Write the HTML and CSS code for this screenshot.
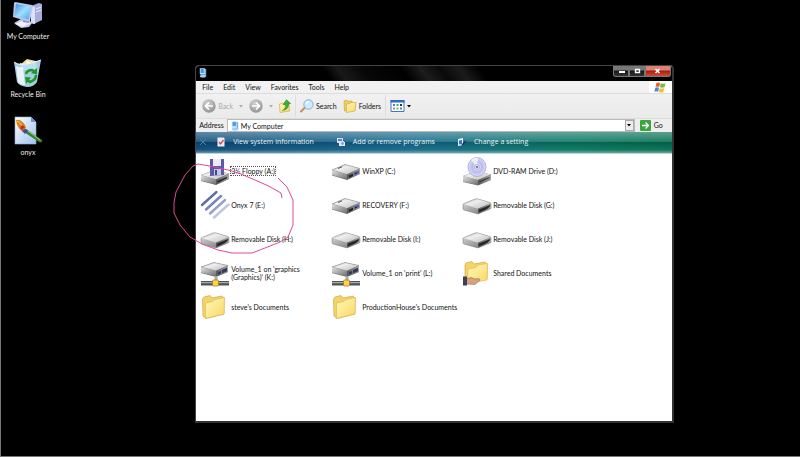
FILE: index.html
```html
<!DOCTYPE html>
<html lang="en">
<head>
<meta charset="utf-8">
<title>My Computer</title>
<link rel="stylesheet" href="styles.css">
</head>
<body>
<svg class="defs" aria-hidden="true">
  <defs>
    <linearGradient id="gTop" x1="0" y1="0" x2="1" y2="1"><stop offset="0" stop-color="#9a9a9a"/><stop offset=".35" stop-color="#efefef"/><stop offset="1" stop-color="#b9b9b9"/></linearGradient>
    <linearGradient id="gLeft" x1="0" y1="0" x2="1" y2="1"><stop offset="0" stop-color="#e2e2e2"/><stop offset="1" stop-color="#6d6d6d"/></linearGradient>
    <linearGradient id="gRight" x1="0" y1="0" x2="1" y2="0"><stop offset="0" stop-color="#555"/><stop offset="1" stop-color="#a8a8a8"/></linearGradient>
    <linearGradient id="gFolder" x1="0" y1="0" x2="1" y2="1"><stop offset="0" stop-color="#fff9b8"/><stop offset="1" stop-color="#f8d766"/></linearGradient>
    <linearGradient id="gScreen" x1="0" y1="0" x2="1" y2="1"><stop offset="0" stop-color="#3f86e6"/><stop offset=".5" stop-color="#9fe0ff"/><stop offset="1" stop-color="#4c9df0"/></linearGradient>
    <linearGradient id="gPaper" x1="0" y1="0" x2="1" y2="1"><stop offset="0" stop-color="#ffffff"/><stop offset="1" stop-color="#9fc0ee"/></linearGradient>
    <radialGradient id="gRound" cx=".4" cy=".3" r=".8"><stop offset="0" stop-color="#d2d2d2"/><stop offset="1" stop-color="#8c8c8c"/></radialGradient>
    <radialGradient id="gDisc"><stop offset=".2" stop-color="#fff"/><stop offset=".5" stop-color="#b7b9ea"/><stop offset="1" stop-color="#dcdcf8"/></radialGradient>

    <symbol id="drive" viewBox="0 0 30 30">
      <path d="M1 14 14 8.500 29 12.500V18L16 24 1 19.500Z" fill="#707070"/>
      <path d="M1 14 14 8.500 29 12.500 16 18.500Z" fill="url(#gTop)" stroke="#8b8b8b" stroke-width=".5"/>
      <path d="M1 14 16 18.500V23.500L1 19Z" fill="url(#gLeft)"/>
      <path d="M16 18.500 29 12.500V17.500L16 23.500Z" fill="url(#gRight)"/>
      <path d="m18 19.500 4-1.800v2.400l-4 1.800Z" fill="#222"/>
      <path d="m23 16.500 5-2.200v3l-5 2.300Z" fill="#5a609e"/>
      <path d="m24 17.200 2-.9v1.300l-2 .9Z" fill="#20264f"/>
      <path d="m7 12.500 4-1.700" stroke="#555" stroke-width="1"/>
    </symbol>
    <symbol id="removable" viewBox="0 0 30 30">
      <path d="M1 14.500Q1 14 2 13.500L13 9Q14.500 8.500 16 9L28 12.500Q29 13 29 14V18Q29 18.500 28 19L17 23.500Q16 24 15 23.700L2 20Q1 19.500 1 19Z" fill="url(#gLeft)" stroke="#777" stroke-width=".5"/>
      <path d="M1.500 14 14.500 9 29 13 16 18.700Z" fill="url(#gTop)"/>
      <path d="M16 18.700 29 13V18L16 23.700Z" fill="url(#gRight)"/>
      <path d="M17 19.800 28.500 14.800Q28 18.800 17 22.300Z" fill="#262626"/>
    </symbol>
    <symbol id="floppy" viewBox="0 0 30 30">
      <path d="M1 19 14 14 29 17.500V23L16 29 1 25Z" fill="#666"/>
      <path d="M1 19 14 14 29 17.500 16 23.500Z" fill="url(#gTop)"/>
      <path d="M1 19 16 23.500V28.500L1 24.500Z" fill="url(#gLeft)"/>
      <path d="M16 23.500 29 17.500V23L16 28.500Z" fill="url(#gRight)"/>
      <path d="m17.500 25 9.500-4.300v1.600l-9.500 4.400Z" fill="#222"/>
      <path d="M10 3H24V19L10 20Z" fill="#5b5aa8"/>
      <path d="M13 3h8v7h-8Z" fill="#e9ebf7"/><path d="M14 13h7v6l-7 .5Z" fill="#c5c7e6"/><path d="M15 14h2v5h-2Z" fill="#444488"/>
    </symbol>
    <symbol id="dvd" viewBox="0 0 30 30">
      <path d="M1 20 14 15 29 18.500V24L16 29.500 1 26Z" fill="#777"/>
      <path d="M1 20 14 15 29 18.500 16 24Z" fill="url(#gTop)"/>
      <path d="M1 20 16 24V29L1 25.500Z" fill="url(#gLeft)"/>
      <path d="M16 24 29 18.500V23.500L16 29Z" fill="url(#gRight)"/>
      <path d="m17.500 25.300 10-4.200v1l-10 4.300Z" fill="#333"/>
      <ellipse cx="15" cy="11" rx="9" ry="9.500" fill="url(#gDisc)" stroke="#9a9bc8" stroke-width=".7"/>
      <path d="M15 11 9 4Q12 1.500 16 1.800Z" fill="#fff" opacity=".7"/>
      <circle cx="15" cy="11" r="2.500" fill="#e9e9f7" stroke="#7d80b8" stroke-width=".6"/><circle cx="15" cy="11" r="1" fill="#555a88"/>
    </symbol>
    <symbol id="netdrive" viewBox="0 0 30 30">
      <path d="M1 9 14 4.500 28 7.500V14L16 19 1 15Z" fill="#666"/>
      <path d="M1 9 14 4.500 28 7.500 16 13Z" fill="url(#gTop)" stroke="#888" stroke-width=".5"/>
      <path d="M1 9 16 13V18.500L1 14.500Z" fill="url(#gLeft)"/>
      <path d="M16 13 28 7.500V13.500L16 18.500Z" fill="url(#gRight)"/>
      <path d="m18 14.300 3-1.300v2.400l-3 1.300ZM22 12l5-2.300v3.500L22 15.300Z" fill="#33385f"/>
      <path d="M14.500 18h3v5h-3Z" fill="#aaa"/>
      <path d="M1 23H29V27.500H1Z" fill="#4e5557"/><path d="M1 24H29V25.200H1Z" fill="#a5adaf"/>
      <rect x="12.500" y="22" width="6" height="6" rx="1" fill="#ffd24d" stroke="#a07718" stroke-width=".7"/>
    </symbol>
    <symbol id="folder" viewBox="0 0 30 30">
      <path d="M2.500 7 4 5 10 3.500 12 6 22 4 24 6V22L6 26.500 3 24Z" fill="#f3d567" stroke="#c99b2e" stroke-width=".6"/>
      <path d="M5.500 11 13 9.500 15 7.500 24.500 5.500 24 22 5.500 26.500Z" fill="url(#gFolder)" stroke="#dab354" stroke-width=".6"/>
    </symbol>
    <symbol id="shared" viewBox="0 0 30 30">
      <path d="M3 7 4 5 10 3.500 12 6 23 4 25 6V21L6 24.500 3 23Z" fill="#f3d567" stroke="#c99b2e" stroke-width=".6"/>
      <path d="M6 11 14 9.500 16 7 25.500 5.500 25 22 5.500 25.500Z" fill="url(#gFolder)" stroke="#dab354" stroke-width=".6"/>
      <path d="M4 21 9 19.500 13 21 17 20.500 18 22 13 26.500 4 26Z" fill="#d9a27c" stroke="#8a5a40" stroke-width=".5"/>
      <path d="M1 18.500H5V27.500H1Z" fill="#39405a"/>
    </symbol>
    <symbol id="lines" viewBox="0 0 30 30">
      <g stroke-width="2.400" stroke-linecap="round"><path d="M2 15 16.500 2" stroke="#5f6ea8"/><path d="M6 19.500 21 6" stroke="#7784b8"/><path d="M10 23.500 25 10" stroke="#959fc9"/><path d="M14 27.500 28.500 14.500" stroke="#c0c6e1"/></g>
    </symbol>
    <symbol id="computer" viewBox="0 0 30 30">
      <path d="M18 6 26 3 29 4V20L21 24 18 23Z" fill="#a7aedb"/><path d="M18 6 22 7V24L18 23Z" fill="#dfe1f6"/><path d="m23 9 5-2M23 12l5-2" stroke="#eceefd"/>
      <path d="M1 23 8 19 20 22 16 27 8 28Z" fill="#c3c8e6"/><path d="M2 24 9 21 18 23 10 27Z" fill="#eef0fb"/>
      <path d="m10 19 6 1v3l-6-1Z" fill="#8d93bf"/>
      <path d="M2 2 19 5 20 6 17 21 15 21.500 0 17 1 3Z" fill="#b9c6ea"/>
      <path d="M3 4 18 6.500 15.500 19.500 1.500 16Z" fill="url(#gScreen)"/>
    </symbol>
    <symbol id="bin" viewBox="0 0 30 30">
      <path d="m8 6 6-5 4 1 5 1 1 8H8Z" fill="#f5e3a0"/><path d="m7 5 6 2 1-4 6 3-2 6H8Z" fill="#fff"/>
      <path d="M1 4Q7 9 28 2L24 24Q21 29 14 29 6 28 4 24Z" fill="#b8dcf2" opacity=".92"/>
      <path d="M3 8Q8 10 10 9L12 27Q7 27 5 24Z" fill="#f3faff" opacity=".85"/>
      <path d="M1 4Q7 10 28 2" fill="none" stroke="#e6f6ff"/>
      <g fill="none" stroke="#159a2b" stroke-width="2.600"><path d="M13 16Q14 12 19 12L22 14"/><path d="M23 17Q23 22 17 24L14 22"/></g>
      <path d="m18 15 6 1.500V10ZM18 19.500l-6-.5 1 7Z" fill="#159a2b"/>
    </symbol>
    <symbol id="paint" viewBox="0 0 30 30">
      <path d="M2 1H18L23 6V28H2Z" fill="url(#gPaper)" stroke="#91b1e2" stroke-width=".6"/><path d="M18 1V6H23Z" fill="#6793d5"/>
      <path d="M13 13 29 24Q30 27 26 26L11 16Z" fill="#37822e"/><path d="m15 15 12 9" stroke="#9ad07d"/>
      <path d="m10 11 5 4-3 3-4-4Z" fill="#3a4d9e"/><path d="M3 4Q8 3 12 9L13 12 9 15Q4 12 3 4Z" fill="#d8841d"/><path d="M4 5Q8 6 10 12" stroke="#ffd55f" fill="none"/><path d="m9 9 3 2-3 3-2-2Z" fill="#b9341d"/>
    </symbol>
    <symbol id="pc" viewBox="0 0 10 12">
      <path d="M1 0H7L8 1V7L7 8H2L1 7Z" fill="#bfe1ff"/><path d="M2 1H6V6H2Z" fill="#4a97ec"/><path d="M7 1H9V10H7Z" fill="#7db2e8"/><path d="M2 8H7L9 11 5 12 1 11Z" fill="#9dd0f8"/>
    </symbol>
  </defs>
</svg>

<main class="desktop">
  <nav class="shortcuts" aria-label="Desktop">
    <a class="shortcut" href="#"><svg><use href="#computer"/></svg><span>My Computer</span></a>
    <a class="shortcut" href="#"><svg><use href="#bin"/></svg><span>Recycle Bin</span></a>
    <a class="shortcut" href="#"><svg><use href="#paint"/></svg><span>onyx</span></a>
  </nav>

  <section class="window" aria-label="My Computer">
    <header class="titlebar">
      <svg class="pc"><use href="#pc"/></svg>
      <div class="controls">
        <button aria-label="Minimize"><svg viewBox="0 0 15 10"><path d="M5 5h6v2H5z" fill="#fff"/></svg></button>
        <button aria-label="Maximize"><svg viewBox="0 0 15 10"><path d="M5.500 3.500h4v3h-4z" fill="none" stroke="#fff" stroke-width="1.400"/></svg></button>
        <button class="close" aria-label="Close"><svg viewBox="0 0 15 10"><path d="m5.500 3 4 4m0-4-4 4" stroke="#fff" stroke-width="1.600"/></svg></button>
      </div>
    </header>

    <div class="menurow">
      <nav class="menu" aria-label="Menu">
        <button>File</button><button>Edit</button><button>View</button><button>Favorites</button><button>Tools</button><button>Help</button>
      </nav>
      <div class="flag">
        <svg viewBox="0 0 12 11"><path d="M2.500 1Q4.500 0 6 1L5.200 5Q3.500 4 1.500 5Z" fill="#ee5a2e"/><path d="M6.700 1.300Q9 2.300 11.500 1.200L10.500 5.300Q8.500 6.200 5.900 5.300Z" fill="#7cbb3c"/><path d="M1.300 5.800Q3.300 4.800 5 5.800L4.200 9.800Q2.500 8.800.3 9.800Z" fill="#4688dd"/><path d="M5.700 6.200Q8 7 10.300 6.200L9.300 10.200Q7.200 11 4.900 10.100Z" fill="#f7bd2e"/></svg>
      </div>
    </div>

    <div class="toolbar">
      <button class="tool muted"><svg class="round" viewBox="0 0 14 14"><circle cx="7" cy="7" r="6.700" fill="url(#gRound)"/><path d="M11 7H4M7 3.500 3.500 7 7 10.500" fill="none" stroke="#fff" stroke-width="1.700"/></svg>Back</button>
      <svg class="caret muted" viewBox="0 0 4 3"><path d="M0 0h4L2 2.500z"/></svg>
      <button class="tool" aria-label="Forward"><svg class="round" viewBox="0 0 14 14"><circle cx="7" cy="7" r="6.700" fill="url(#gRound)"/><path d="M3 7h7M7 3.500 10.500 7 7 10.500" fill="none" stroke="#fff" stroke-width="1.700"/></svg></button>
      <svg class="caret muted" viewBox="0 0 4 3"><path d="M0 0h4L2 2.500z"/></svg>
      <button class="tool" aria-label="Up"><svg class="up" viewBox="0 0 12 14"><path d="M.5 5 4 4 5 5.500 10 4.500 10.500 12 1 13.500Z" fill="url(#gFolder)" stroke="#cfa33b" stroke-width=".6"/><path d="M3.500 11.500Q7 10 6.500 5.500H4L7.500.8 11.700 4.500 9.500 5Q9.800 10.500 3.500 11.500Z" fill="#3eae32" stroke="#23801e" stroke-width=".5"/></svg></button>
      <span class="rule"></span>
      <button class="tool"><svg class="round" viewBox="0 0 14 14"><path d="m5.500 8-5 5" stroke="#c98d5d" stroke-width="2"/><circle cx="8.500" cy="5.500" r="4.700" fill="#cdeaff" stroke="#7fb0d8"/><path d="M6 5Q6.500 2.800 9 2.700" fill="none" stroke="#fff" stroke-width="1.300"/></svg>Search</button>
      <button class="tool"><svg class="round" viewBox="0 0 14 14"><path d="M1 2 4 1 5 2.500 9 2V11L1.500 12Z" fill="#f3cf5c" stroke="#c99b2e" stroke-width=".6"/><path d="M3.500 5 7 4.500 8 3.500 13 3.500 12 12 3.500 13.500Z" fill="url(#gFolder)" stroke="#cfa03a" stroke-width=".6"/></svg>Folders</button>
      <span class="rule"></span>
      <button class="tool" aria-label="Views"><svg class="views" viewBox="0 0 14 12"><path d="M.5.500h13v11H.5z" fill="#fff" stroke="#3c78c8"/><path d="M0 0h14v2.500H0z" fill="#2e6dc4"/><path d="M2.500 4h2v2h-2zm7 3.500h2v2h-2z" fill="#6274c4"/><path d="M6 4h2v2H6z" fill="#4ba563"/><path d="M9.500 4h2v2h-2z" fill="#333"/><path d="M2.500 7.500h2v2h-2z" fill="#cc7b7b"/><path d="M6 7.500h2v2H6z" fill="#51b6c8"/></svg><svg class="caret" viewBox="0 0 4 3"><path d="M0 0h4L2 2.500z"/></svg></button>
    </div>

    <form class="address">
      <label for="addr">Address</label>
      <div class="field">
        <svg class="pc"><use href="#pc"/></svg>
        <input id="addr" type="text" value="My Computer">
        <button type="button" class="drop" aria-label="Show addresses"><svg class="caret" viewBox="0 0 4 3"><path d="M0 0h4L2 2.500z"/></svg></button>
      </div>
      <button type="button" class="go"><svg viewBox="0 0 11 11"><rect width="11" height="11" rx="1" fill="#38a63c"/><path d="M2 5.500h6M5.500 2.500l3 3-3 3" fill="none" stroke="#fff" stroke-width="1.300"/></svg>Go</button>
    </form>

    <div class="tasks">
      <button class="dismiss" aria-label="Dismiss"><svg viewBox="0 0 6 6"><path d="m0 0 6 6M6 0 0 6" stroke="#4b87a5"/></svg></button>
      <a href="#"><svg viewBox="0 0 10 10"><path d="M1.500.5h6l1 1v8h-7z" fill="#e9edf8"/><path d="m3 5 1.500 2L7.500 3" fill="none" stroke="#d3473a" stroke-width="1.300"/></svg>View system information</a>
      <a href="#"><svg viewBox="0 0 10 10"><path d="M1 1h6v5H1z" fill="#cfe0fa"/><path d="M2 2h4v2H2z" fill="#5384d0"/><path d="M3 5h6v4H3z" fill="#dfe7f7"/><circle cx="6.500" cy="6.500" r="2" fill="#8ba4d4" stroke="#eef"/></svg>Add or remove programs</a>
      <a href="#"><svg viewBox="0 0 10 10"><path d="M1 2 6 1V8L1 9Z" fill="#e8effd"/><path d="M2 3.500 5 3V7L2 7.500Z" fill="#3e70cd"/><path d="m5 8 4-4" stroke="#1e365f" stroke-width="1.600"/></svg>Change a setting</a>
    </div>

    <div class="files">
      <a class="file selected" href="#"><svg><use href="#floppy"/></svg><span>3½ Floppy (A:)</span></a>
      <a class="file" href="#"><svg><use href="#drive"/></svg><span>WinXP (C:)</span></a>
      <a class="file" href="#"><svg><use href="#dvd"/></svg><span>DVD-RAM Drive (D:)</span></a>
      <a class="file" href="#"><svg><use href="#lines"/></svg><span>Onyx 7 (E:)</span></a>
      <a class="file" href="#"><svg><use href="#drive"/></svg><span>RECOVERY (F:)</span></a>
      <a class="file" href="#"><svg><use href="#removable"/></svg><span>Removable Disk (G:)</span></a>
      <a class="file" href="#"><svg><use href="#removable"/></svg><span>Removable Disk (H:)</span></a>
      <a class="file" href="#"><svg><use href="#removable"/></svg><span>Removable Disk (I:)</span></a>
      <a class="file" href="#"><svg><use href="#removable"/></svg><span>Removable Disk (J:)</span></a>
      <a class="file" href="#"><svg><use href="#netdrive"/></svg><span>Volume_1 on 'graphics<br>(Graphics)' (K:)</span></a>
      <a class="file" href="#"><svg><use href="#netdrive"/></svg><span>Volume_1 on 'print' (L:)</span></a>
      <a class="file" href="#"><svg><use href="#shared"/></svg><span>Shared Documents</span></a>
      <a class="file" href="#"><svg><use href="#folder"/></svg><span>steve's Documents</span></a>
      <a class="file" href="#"><svg><use href="#folder"/></svg><span>ProductionHouse's Documents</span></a>
    </div>
  </section>

  <svg class="scribble" viewBox="170 160 126 98" aria-hidden="true">
    <path d="M282 198 281 193Q268 185 255 180L241 174 232 171 215 167 198 164 193 166 185 175 176 192Q173 203 174 213L180 225 190 237 202 244 218 250 232 253H252L265 248 280 242 288 237 293 225V200L287 187 282 182 278 178"/>
  </svg>
</main>
</body>
</html>
```
FILE: styles.css
```css
* { box-sizing: border-box; }

body {
  margin: 0;
  background: #000;
  color: #111;
  font: 7px/9px Lato, "Liberation Sans", sans-serif;
}

button, input {
  margin: 0;
  padding: 0;
  border: 0;
  background: none;
  color: inherit;
  font: inherit;
}

a { color: inherit; text-decoration: none; }
svg { display: block; flex: none; }
.defs { position: absolute; width: 0; height: 0; }

.desktop {
  position: relative;
  min-height: 100vh;
  border-left: 1px solid #777;
  border-bottom: 1px solid #777;
}

/* Desktop shortcuts */
.shortcuts {
  display: flex;
  flex-direction: column;
  gap: 17px;
  width: 54px;
}
.shortcut {
  display: flex;
  flex-direction: column;
  align-items: center;
  gap: 2px;
  color: #eee;
  white-space: nowrap;
}
.shortcut svg { width: 30px; height: 30px; }

/* Window frame */
.window {
  position: absolute;
  top: 65px;
  right: 15.8%;
  bottom: 33px;
  left: 24.3%;
  display: flex;
  flex-direction: column;
  overflow: hidden;
  border: 1px solid #444;
  border-right: 2px solid #333;
  border-bottom: 2px solid #333;
  border-radius: 4px 4px 0 0;
  background: #fff;
}

.titlebar {
  display: flex;
  justify-content: space-between;
  height: 15px;
  padding: 0 1px 0 2px;
  background: linear-gradient(52deg, #000 28%, #191919 31%, #070707 36%, #000 44%, #1d1d1d 48%, #0a0a0a 52%, #1b1b1b 56%, #000 60%);
}
.pc { width: 8px; height: 10px; }
.titlebar .pc { margin: 2px 0 0 1px; }
.controls { display: flex; height: 11px; }
.controls button {
  display: grid;
  place-items: center;
  width: 16px;
  border: 1px solid #777;
  border-top: 0;
  background: linear-gradient(#777 0 40%, #161616 50%, #333);
}
.controls button:first-child { border-bottom-left-radius: 3px; }
.controls svg { width: 15px; height: 10px; }
.controls .close {
  width: 26px;
  border-bottom-right-radius: 3px;
  background: linear-gradient(#d98275 0 40%, #a51d12 50%, #d04b35);
}

/* Menu */
.menurow {
  display: flex;
  justify-content: space-between;
  height: 13px;
  border-bottom: 1px solid #ddd;
  background: #f1f1f1;
}
.menu { display: flex; gap: 10px; padding-left: 6px; }
.flag { display: grid; place-items: center; width: 23px; background: #fff; }
.flag svg { width: 12px; height: 11px; }

/* Toolbar */
.toolbar {
  display: flex;
  align-items: center;
  gap: 6px;
  height: 25px;
  padding-left: 6px;
  border-bottom: 1px solid #ddd;
  background: linear-gradient(#f1f1f1, #eaeaea);
}
.tool { display: flex; align-items: center; gap: 2px; }
.muted { color: #aaa; fill: #aaa; }
.round { width: 14px; height: 14px; }
.up { width: 12px; height: 14px; }
.views { width: 15px; height: 12px; }
.caret { width: 4px; height: 3px; }
.rule { width: 1px; height: 22px; margin: 0 -2px; background: #ddd; }

/* Address bar */
.address {
  display: flex;
  align-items: center;
  height: 13px;
  padding: 0 9px 0 3px;
  gap: 3px;
  background: #eee;
}
.field {
  display: flex;
  flex: 1;
  align-items: center;
  gap: 2px;
  height: 13px;
  padding-left: 3px;
  border: 1px solid #bbb;
  background: #fff;
}
.field input { flex: 1; min-width: 0; height: 11px; outline: 0; }
.drop {
  display: grid;
  place-items: center;
  width: 9px;
  height: 11px;
  border: 1px solid #aaa;
  background: #eee;
}
.go { display: flex; align-items: center; gap: 3px; padding-left: 2px; }
.go svg { width: 11px; height: 11px; }

/* Task strip */
.tasks {
  display: flex;
  align-items: center;
  gap: 22px;
  height: 22px;
  padding: 0 4px 2px;
  border-bottom: 1px solid #b7d5d5;
  background:
    linear-gradient(rgba(255, 255, 255, .35), rgba(255, 255, 255, .12) 45%, rgba(0, 0, 0, .12) 50%, rgba(255, 255, 255, .05) 85%, rgba(255, 255, 255, .4)),
    linear-gradient(90deg, #0b4a78, #14678a 45%, #08765f 80%, #046c50);
  color: #e4f3f5;
  font: 7px/10px "Open Sans", "Noto Sans", sans-serif;
}
.tasks a { display: flex; align-items: center; gap: 7px; }
.tasks a svg { width: 10px; height: 10px; }
.dismiss { margin-right: -12px; }
.dismiss svg { width: 6px; height: 6px; }

/* File tiles */
.files {
  display: grid;
  grid-template-columns: repeat(auto-fill, 131px);
  grid-auto-rows: 34px;
  padding-left: 4px;
}
.file {
  display: flex;
  align-items: center;
  gap: 1px;
  line-height: 8px;
  white-space: nowrap;
}
.file svg { width: 30px; height: 30px; }
.file.selected span { outline: 1px dotted #555; }

/* Pen mark over the window */
.scribble {
  position: absolute;
  top: 160px;
  left: 169px;
  width: 126px;
  height: 98px;
  pointer-events: none;
}
.scribble path { fill: none; stroke: #dc4a92; stroke-width: 1; stroke-linejoin: round; }
```
